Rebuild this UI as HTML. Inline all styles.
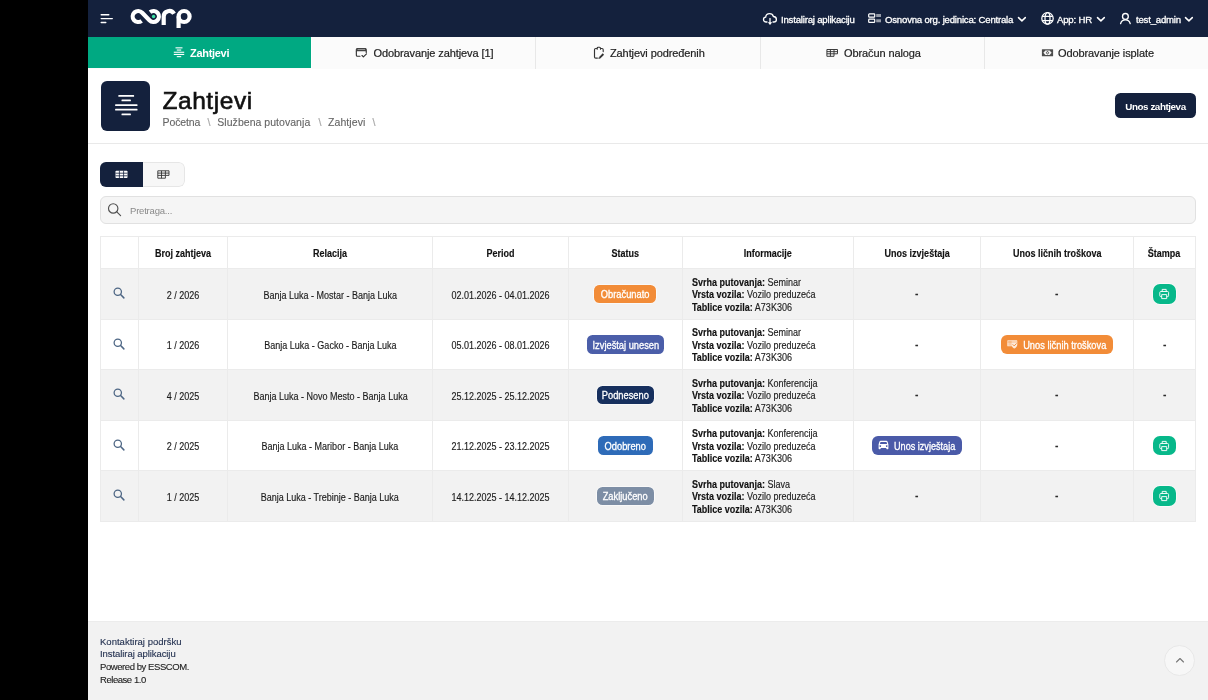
<!DOCTYPE html>
<html lang="bs">
<head>
<meta charset="utf-8">
<title>Zahtjevi</title>
<style>
*{box-sizing:border-box;margin:0;padding:0}
html,body{width:1208px;height:700px;overflow:hidden;background:#000}
body{font-family:"Liberation Sans",sans-serif;color:#111;position:relative}
.abs{position:absolute}
#app{will-change:transform;position:absolute;left:88px;top:0;width:1120px;height:700px;background:#fff;overflow:hidden}
/* navbar */
#nav{position:absolute;left:0;top:0;width:1120px;height:37px;background:#14213d}
.nt{position:absolute;top:1px;height:37px;line-height:37px;color:#fff;font-size:9.6px;white-space:nowrap;letter-spacing:-0.2px;-webkit-text-stroke:0.3px #fff}
/* tabs */
#tabs{position:absolute;left:0;top:37px;width:1120px;height:31.8px;background:#fbfbfb;box-shadow:inset 0 1.5px 0 #fff}
.tab{position:absolute;top:0;height:31.8px;width:224px;border-left:1px solid #e8e8e8;background:#fbfbfb}
.tab.on{background:#00a982;border-left:none;width:223.3px;height:31.2px}
.tl{position:absolute;top:0.5px;height:31px;line-height:31px;font-size:11px;color:#222;white-space:nowrap;letter-spacing:-0.1px;-webkit-text-stroke:0.2px #222}
.tab.on .tl{-webkit-text-stroke:0;color:#fff;font-weight:bold;font-size:11px;letter-spacing:-0.3px}
/* header */
#ibox{position:absolute;left:12.5px;top:81px;width:49.5px;height:49.6px;border-radius:6px;background:#14213d}
#title{position:absolute;left:74.5px;top:85px;font-size:24.5px;line-height:32px;color:#111;letter-spacing:0.55px;-webkit-text-stroke:0.6px #111}
#crumbs{position:absolute;left:0;top:114.5px;font-size:10.5px;line-height:14px;color:#666;white-space:nowrap;-webkit-text-stroke:0.12px #666}
#crumbs span{position:absolute;top:0}#crumbs i{position:absolute;top:0;font-style:normal;color:#b5b5b5}
#btn{position:absolute;left:1027.4px;top:93.1px;width:80.2px;height:24.9px;border-radius:5.5px;background:#14213d;color:#fff;font-size:9.8px;font-weight:bold;line-height:27px;text-align:center;letter-spacing:-0.42px;overflow:hidden}
#hr1{position:absolute;left:0;top:143px;width:1120px;height:1px;background:#e9e9e9}
/* toggle */
#tg{position:absolute;left:12px;top:161.5px;width:85px;height:25.2px;border-radius:6px;overflow:hidden}
#tg .l{position:absolute;left:0;top:0;width:43px;height:100%;background:#14213d}#tg .r{position:absolute;left:43px;top:0;width:42px;height:100%;background:#f7f7f7;border:1px solid #e6e6e6;border-left:none;border-radius:0 6px 6px 0}
/* search */
#sr{position:absolute;left:12px;top:196px;width:1095.6px;height:27.8px;border-radius:6px;background:#f5f5f5;border:1px solid #e1e1e1}
#sr span{position:absolute;left:29px;top:0.8px;line-height:26px;font-size:9.5px;color:#8a8a8a;letter-spacing:-0.2px}
/* table */
#tbl{position:absolute;left:12px;top:236px;width:1095px;border-collapse:collapse;table-layout:fixed;font-size:10px;color:#1c1c1c}
#tbl th,#tbl td{border:1px solid #ebebeb;text-align:center;vertical-align:middle;padding:0;white-space:nowrap}
#tbl th{height:32px;font-weight:bold;color:#111;background:#fff}
#tbl td{height:50.5px}
#tbl tr.o td{background:#f2f2f2}
.x{display:inline-block;position:relative;top:1.3px;transform:scaleX(0.9);transform-origin:50% 50%;-webkit-text-stroke:0.15px currentColor}
#tbl td.inf{text-align:left;padding-left:9px;line-height:12.4px}
#tbl td.inf .x{transform-origin:0 50%;top:1.6px}
#tbl td.inf b{color:#111}
.bd{display:inline-block;height:18.6px;line-height:18.4px;border-radius:5.5px;color:#fff;padding:0;white-space:nowrap;position:relative;top:0.3px;text-align:center;box-shadow:0 0 0 0.8px rgba(255,255,255,0.75)}
.x.d{top:0.2px;-webkit-text-stroke:0.4px currentColor}.bd.bt .x{top:0.7px}.bd .x{-webkit-text-stroke:0.3px #fff;top:1.6px;transform:scaleX(0.93)}
.bd.bt{padding:0;height:19px;line-height:19px;border-radius:6px;top:0.2px}.bd.bt svg{position:relative;left:1.5px}
.pr{display:inline-block;width:22.4px;height:19.6px;position:relative;top:0.2px;border-radius:7px;background:#07b88a;vertical-align:middle;box-shadow:0 0 0 0.7px rgba(255,255,255,0.8)}.pr svg{display:block}
/* footer */
#ft{position:absolute;left:0;top:621px;width:1120px;height:79px;background:#f2f2f2;border-top:1px solid #ececec}
#ft div.t{position:absolute;left:12px;font-size:9.5px;line-height:12px;color:#222;white-space:nowrap;letter-spacing:-0.15px;-webkit-text-stroke:0.12px currentColor}
#top{position:absolute;left:1076.3px;top:23.3px;width:31px;height:31px;border-radius:50%;background:#f7f7f7;border:1px solid #e8e8e8}
</style>
</head>
<body>
<div id="app">
  <div id="nav">
    <!-- hamburger -->
    <svg class="abs" style="left:12px;top:13px" width="14" height="12" viewBox="0 0 14 12"><g fill="#fff"><rect x="0.5" y="1" width="9" height="1.4" rx="0.7"/><rect x="0.5" y="4.9" width="12.5" height="1.4" rx="0.7"/><rect x="0.5" y="8.8" width="6" height="1.4" rx="0.7"/></g></svg>
    <!-- logo -->
    <svg class="abs" style="left:38px;top:4px" width="70" height="28" viewBox="0 0 70 28">
      <g fill="none" stroke="#fff" stroke-width="4.2" stroke-linecap="butt" stroke-linejoin="round">
        <path d="M15.59 16.83 A5.5 5.5 0 1 1 16.18 8.71 L23.42 16.29 A5.5 5.5 0 1 0 24.01 8.17"/>
        <path d="M37.7 21.1 V12.5 A5.5 5.5 0 0 1 48.0 9.8"/>
        <path d="M52.6 24 V12.5"/>
        <circle cx="58.1" cy="12.5" r="5.5"/>
      </g>
      <circle cx="27.6" cy="12.5" r="1.7" fill="#3be0a3"/>
    </svg>
    <!-- install -->
    <svg class="abs" style="left:674px;top:12px" width="16" height="14" viewBox="0 0 16 14"><g fill="none" stroke="#fff" stroke-width="1.3" stroke-linecap="round" stroke-linejoin="round"><path d="M5 10 H4.2 C2.5 10 1.5 8.9 1.5 7.5 C1.5 6.2 2.4 5.2 3.7 5.1 C3.9 3.1 5.5 1.7 7.6 1.7 C9.4 1.7 10.9 2.8 11.4 4.5 C13.1 4.6 14.4 5.8 14.4 7.4 C14.4 8.9 13.3 10 11.8 10 H11"/><path d="M8 6.6 V11.6"/></g><path d="M5.8 10.3 H10.2 L8 13 Z" fill="#fff"/></svg>
    <div class="nt" style="left:693px">Instaliraj aplikaciju</div>
    <!-- org -->
    <svg class="abs" style="left:780px;top:12px" width="14" height="12" viewBox="0 0 14 12"><g fill="none" stroke="#fff" stroke-width="1.2"><rect x="0.7" y="1.9" width="6" height="3.2" rx="0.7"/><rect x="0.7" y="7.2" width="6" height="3.2" rx="0.7"/></g><g fill="#fff" opacity="0.55"><rect x="8.2" y="2" width="4.8" height="3"/><rect x="8.2" y="7.3" width="4.8" height="3"/></g></svg>
    <div class="nt" style="left:797px">Osnovna org. jedinica: Centrala</div>
    <svg class="abs" style="left:929px;top:16px" width="10" height="6" viewBox="0 0 10 6"><path d="M1.5 1.6 L4.9 4.9 L8.3 1.6" fill="none" stroke="#fff" stroke-width="1.5" stroke-linecap="round" stroke-linejoin="round"/></svg>
    <!-- globe -->
    <svg class="abs" style="left:951.5px;top:11px" width="15" height="15" viewBox="0 0 15 15"><g fill="none" stroke="#fff" stroke-width="1.25"><circle cx="7.5" cy="7.4" r="5.7"/><ellipse cx="7.5" cy="7.4" rx="2.5" ry="5.7"/><path d="M2.3 5.3 H12.7 M2.3 9.5 H12.7"/></g></svg>
    <div class="nt" style="left:969px">App: HR</div>
    <svg class="abs" style="left:1008px;top:16px" width="10" height="6" viewBox="0 0 10 6"><path d="M1.5 1.6 L4.9 4.9 L8.3 1.6" fill="none" stroke="#fff" stroke-width="1.5" stroke-linecap="round" stroke-linejoin="round"/></svg>
    <!-- user -->
    <svg class="abs" style="left:1031px;top:12px" width="13" height="13" viewBox="0 0 13 13"><g fill="none" stroke="#fff" stroke-width="1.35" stroke-linecap="round"><circle cx="6.4" cy="4.4" r="2.9"/><path d="M1.6 11.6 C2.3 9.2 4.1 7.9 6.4 7.9 C8.7 7.9 10.5 9.2 11.2 11.6"/></g></svg>
    <div class="nt" style="left:1048px">test_admin</div>
    <svg class="abs" style="left:1096px;top:16px" width="10" height="6" viewBox="0 0 10 6"><path d="M1.5 1.6 L4.9 4.9 L8.3 1.6" fill="none" stroke="#fff" stroke-width="1.5" stroke-linecap="round" stroke-linejoin="round"/></svg>
  </div>
  <div id="tabs">
    <div class="tab on" style="left:0">
      <svg class="abs" style="left:85px;top:10px" width="12" height="11" viewBox="0 0 12 11"><g fill="#fff"><rect x="2.5" y="0.3" width="7" height="1.1"/><rect x="3.8" y="2.5" width="4.4" height="1.1"/><rect x="0.8" y="4.7" width="10.4" height="1.1"/><rect x="0.8" y="6.9" width="10.4" height="1.1"/><rect x="3.8" y="9.1" width="4.4" height="1.1"/></g></svg>
      <div class="tl" style="left:102px">Zahtjevi</div>
    </div>
    <div class="tab" style="left:223.3px;width:224.7px;border-left:1.5px solid #fff">
      <svg class="abs" style="left:43.2px;top:10px" width="13" height="12" viewBox="0 0 13 12"><path d="M0.8 4.3 V2.6 C0.8 1.7 1.5 1 2.4 1 H10.2 C11.1 1 11.8 1.7 11.8 2.6 V4.3 Z" fill="#444"/><path d="M2.6 2.5 H10" stroke="#aaa" stroke-width="0.8"/><g fill="none" stroke="#333" stroke-width="1.15" stroke-linecap="round" stroke-linejoin="round"><path d="M5 9.2 H2.4 C1.7 9.2 1.35 8.8 1.35 8.2 V4"/><path d="M11.25 4 V5.6"/><path d="M7 8.5 L8.4 9.9 L11.5 6.9"/></g></svg>
      <div class="tl" style="left:61.2px">Odobravanje zahtjeva [1]</div>
    </div>
    <div class="tab" style="left:447.2px;width:224.8px">
      <svg class="abs" style="left:56.8px;top:9px" width="13" height="14" viewBox="0 0 13 14"><g fill="none" stroke="#333" stroke-width="1.15" stroke-linecap="round" stroke-linejoin="round"><path d="M4.4 12.1 H2.7 C2 12.1 1.5 11.6 1.5 10.9 V3.7 C1.5 3 2 2.5 2.7 2.5 H3.6 M8 2.5 H9 C9.7 2.5 10.2 3 10.2 3.7 V5.6"/><path d="M4.2 3.2 V2.2 C4.2 1.6 4.6 1.2 5.2 1.2 H6.5 C7.1 1.2 7.5 1.6 7.5 2.2 V3.2"/><path d="M10.4 8 L6.6 11.8" stroke-width="1.9" stroke-linecap="butt"/></g><path d="M5.4 12.9 L5.9 11.1 L7.2 12.4 Z" fill="#333"/></svg>
      <div class="tl" style="left:73.8px">Zahtjevi podređenih</div>
    </div>
    <div class="tab" style="left:672px">
      <svg class="abs" style="left:65px;top:11px" width="13" height="10" viewBox="0 0 13 10"><g fill="none" stroke="#333" stroke-width="0.95"><path d="M0.9 1.5 H11.5 V5.8 H8 V8.3 H0.9 Z"/><path d="M4.4 1.5 V8.3 M8 1.5 V5.8 M0.9 3.65 H11.5 M0.9 5.8 H8"/></g></svg>
      <div class="tl" style="left:83px">Obračun naloga</div>
    </div>
    <div class="tab" style="left:896px">
      <svg class="abs" style="left:56px;top:11px" width="13" height="10" viewBox="0 0 13 10"><rect x="0.9" y="1.2" width="11.2" height="7" rx="0.5" fill="#4d4d4d"/><path d="M2.4 4.7 L4.4 2.5 H8.6 L10.6 4.7 L8.6 6.9 H4.4 Z" fill="#f4f4f4"/><path d="M6.5 2.7 L8.2 4.7 L6.5 6.7 L4.8 4.7 Z" fill="#555"/><path d="M6.5 3.7 L7.3 4.7 L6.5 5.7 L5.7 4.7 Z" fill="#eee"/></svg>
      <div class="tl" style="left:73px">Odobravanje isplate</div>
    </div>
  </div>
  <div id="ibox">
    <svg class="abs" style="left:13px;top:13px" width="24" height="24" viewBox="0 0 24 24"><g fill="#fff"><rect x="4.3" y="1" width="15.8" height="1.7" rx="0.5"/><rect x="7.5" y="5.6" width="9.4" height="1.7" rx="0.5"/><rect x="1.1" y="10.2" width="22.4" height="1.7" rx="0.5"/><rect x="1.1" y="14.8" width="22.4" height="1.7" rx="0.5"/><rect x="7.5" y="19.5" width="9.4" height="1.7" rx="0.5"/></g></svg>
  </div>
  <div id="title">Zahtjevi</div>
  <div id="crumbs"><span style="left:74.6px;letter-spacing:-0.12px">Početna</span><i style="left:119.4px">\</i><span style="left:129.3px;letter-spacing:0.04px">Službena putovanja</span><i style="left:230.6px">\</i><span style="left:240px;letter-spacing:0.08px">Zahtjevi</span><i style="left:284.6px">\</i></div>
  <div id="btn">Unos zahtjeva</div>
  <div id="hr1"></div>
  <div id="tg"><div class="l"></div><div class="r"></div>
    <svg class="abs" style="left:15px;top:8.5px" width="13" height="9" viewBox="0 0 13 9"><rect x="0.5" y="0.7" width="12" height="7.4" rx="0.8" fill="#fff"/><g stroke="#14213d" stroke-width="0.8"><path d="M4.4 0.5 V8.5 M8.6 0.5 V8.5 M0.5 3.2 H12.5 M0.5 5.8 H12.5"/></g></svg>
    <svg class="abs" style="left:57px;top:8.5px" width="13" height="9" viewBox="0 0 13 9"><g fill="none" stroke="#333" stroke-width="0.9"><path d="M0.8 0.8 H12 V5.4 H8.4 V8.2 H0.8 Z"/><path d="M4.5 0.8 V8.2 M8.4 0.8 V5.4 M0.8 3.1 H12 M0.8 5.4 H8.4"/></g></svg>
  </div>
  <div id="sr">
    <svg class="abs" style="left:6px;top:5px" width="15" height="15" viewBox="0 0 15 15"><g fill="none" stroke="#505050" stroke-width="1.15" stroke-linecap="round"><circle cx="6.2" cy="6.4" r="4.7"/><path d="M9.8 9.8 L13.6 13.6"/></g></svg>
    <span>Pretraga...</span></div>
  <table id="tbl"><colgroup><col style="width:37.5px"><col style="width:89.5px"><col style="width:205.25px"><col style="width:136px"><col style="width:113.25px"><col style="width:171px"><col style="width:127.5px"><col style="width:153px"><col style="width:62px"></colgroup>
<tr><th></th><th><span class="x">Broj zahtjeva</span></th><th><span class="x">Relacija</span></th><th><span class="x">Period</span></th><th><span class="x">Status</span></th><th><span class="x">Informacije</span></th><th><span class="x">Unos izvještaja</span></th><th><span class="x">Unos ličnih troškova</span></th><th><span class="x">Štampa</span></th></tr>
<tr class="o"><td><svg width="12.2" height="12.2" viewBox="0 0 13 13" style="vertical-align:middle;position:relative;left:-0.3px;top:-0.3px"><g fill="none" stroke="#4d6684" stroke-width="1.35" stroke-linecap="round"><circle cx="5.1" cy="5.1" r="3.9"/><path d="M8.1 8.1 L11.6 11.6" stroke-width="1.6"/></g></svg></td><td><span class="x">2 / 2026</span></td><td><span class="x">Banja Luka - Mostar - Banja Luka</span></td><td><span class="x">02.01.2026 - 04.01.2026</span></td><td><span class="bd" style="width:62px;background:#f28c38"><span class="x">Obračunato</span></span></td><td class="inf"><span class="x"><b>Svrha putovanja:</b> Seminar<br><b>Vrsta vozila:</b> Vozilo preduzeća<br><b>Tablice vozila:</b> A73K306</span></td><td><span class="x d">-</span></td><td><span class="x d">-</span></td><td><span class="pr"><svg width="22.4" height="19.6" viewBox="0 0 22.4 19.6"><g fill="none" stroke="#fff" stroke-opacity="0.92" stroke-width="1" stroke-linejoin="round"><path d="M9.2 7.5 V5.4 H13.2 V7.5"/><path d="M8.7 12.6 H7.7 C7.1 12.6 6.8 12.3 6.8 11.7 V8.5 C6.8 7.9 7.2 7.5 7.8 7.5 H14.6 C15.2 7.5 15.6 7.9 15.6 8.5 V11.7 C15.6 12.3 15.3 12.6 14.7 12.6 H13.7"/><rect x="8.7" y="10.6" width="5" height="4"/></g></svg></span></td></tr>
<tr><td><svg width="12.2" height="12.2" viewBox="0 0 13 13" style="vertical-align:middle;position:relative;left:-0.3px;top:-0.3px"><g fill="none" stroke="#4d6684" stroke-width="1.35" stroke-linecap="round"><circle cx="5.1" cy="5.1" r="3.9"/><path d="M8.1 8.1 L11.6 11.6" stroke-width="1.6"/></g></svg></td><td><span class="x">1 / 2026</span></td><td><span class="x">Banja Luka - Gacko - Banja Luka</span></td><td><span class="x">05.01.2026 - 08.01.2026</span></td><td><span class="bd" style="width:77px;background:#4b5ea9"><span class="x">Izvještaj unesen</span></span></td><td class="inf"><span class="x"><b>Svrha putovanja:</b> Seminar<br><b>Vrsta vozila:</b> Vozilo preduzeća<br><b>Tablice vozila:</b> A73K306</span></td><td><span class="x d">-</span></td><td><span class="bd bt" style="width:112px;background:#f28c38"><svg width="11" height="9" viewBox="0 0 11 9" style="vertical-align:-1px;margin-right:4.5px;left:2.2px"><path d="M0.3 0.9 Q0.3 0.3 0.9 0.3 H9.7 Q10.3 0.3 10.3 0.9 V4.6 C10.3 6.8 8.7 8 7.4 8.6 C6.5 8.2 5.5 7.5 4.9 6.3 H0.9 Q0.3 6.3 0.3 5.7 Z" fill="#fff" fill-opacity="0.82"/><g fill="none" stroke="#f28c38" stroke-linecap="round" stroke-linejoin="round"><path d="M2.1 1.2 V5.4 M3.9 1.2 V5.4" stroke-width="0.55"/><path d="M0.8 2 H9.8" stroke-width="0.5"/><path d="M5.9 4.6 L7.2 5.9 L9.3 3.7" stroke-width="0.95"/></g></svg><span class="x">Unos ličnih troškova</span></span></td><td><span class="x d">-</span></td></tr>
<tr class="o"><td><svg width="12.2" height="12.2" viewBox="0 0 13 13" style="vertical-align:middle;position:relative;left:-0.3px;top:-0.3px"><g fill="none" stroke="#4d6684" stroke-width="1.35" stroke-linecap="round"><circle cx="5.1" cy="5.1" r="3.9"/><path d="M8.1 8.1 L11.6 11.6" stroke-width="1.6"/></g></svg></td><td><span class="x">4 / 2025</span></td><td><span class="x">Banja Luka - Novo Mesto - Banja Luka</span></td><td><span class="x">25.12.2025 - 25.12.2025</span></td><td><span class="bd" style="width:57px;background:#17305e"><span class="x">Podneseno</span></span></td><td class="inf"><span class="x"><b>Svrha putovanja:</b> Konferencija<br><b>Vrsta vozila:</b> Vozilo preduzeća<br><b>Tablice vozila:</b> A73K306</span></td><td><span class="x d">-</span></td><td><span class="x d">-</span></td><td><span class="x d">-</span></td></tr>
<tr><td><svg width="12.2" height="12.2" viewBox="0 0 13 13" style="vertical-align:middle;position:relative;left:-0.3px;top:-0.3px"><g fill="none" stroke="#4d6684" stroke-width="1.35" stroke-linecap="round"><circle cx="5.1" cy="5.1" r="3.9"/><path d="M8.1 8.1 L11.6 11.6" stroke-width="1.6"/></g></svg></td><td><span class="x">2 / 2025</span></td><td><span class="x">Banja Luka - Maribor - Banja Luka</span></td><td><span class="x">21.12.2025 - 23.12.2025</span></td><td><span class="bd" style="width:55px;background:#2e6bb8"><span class="x">Odobreno</span></span></td><td class="inf"><span class="x"><b>Svrha putovanja:</b> Konferencija<br><b>Vrsta vozila:</b> Vozilo preduzeća<br><b>Tablice vozila:</b> A73K306</span></td><td><span class="bd bt" style="width:90.5px;background:#4a5aa8"><svg width="11" height="10" viewBox="0 0 11 10" style="vertical-align:-1px;margin-right:3px"><path d="M2.6 0.8 H8.4 C8.9 0.8 9.3 1.1 9.5 1.6 L10.4 4.2 V8.6 C10.4 9 10.1 9.3 9.7 9.3 H9 C8.6 9.3 8.3 9 8.3 8.6 V8 H2.7 V8.6 C2.7 9 2.4 9.3 2 9.3 H1.3 C0.9 9.3 0.6 9 0.6 8.6 V4.2 L1.5 1.6 C1.7 1.1 2.1 0.8 2.6 0.8 Z M2.5 2 L1.9 4 H9.1 L8.5 2 Z M2.3 5.2 A0.8 0.8 0 1 0 2.31 5.2 Z M8.7 5.2 A0.8 0.8 0 1 0 8.71 5.2 Z" fill="#fff" fill-rule="evenodd"/></svg><span class="x" style="transform:scaleX(0.91);left:0.7px">Unos izvještaja</span></span></td><td><span class="x d">-</span></td><td><span class="pr"><svg width="22.4" height="19.6" viewBox="0 0 22.4 19.6"><g fill="none" stroke="#fff" stroke-opacity="0.92" stroke-width="1" stroke-linejoin="round"><path d="M9.2 7.5 V5.4 H13.2 V7.5"/><path d="M8.7 12.6 H7.7 C7.1 12.6 6.8 12.3 6.8 11.7 V8.5 C6.8 7.9 7.2 7.5 7.8 7.5 H14.6 C15.2 7.5 15.6 7.9 15.6 8.5 V11.7 C15.6 12.3 15.3 12.6 14.7 12.6 H13.7"/><rect x="8.7" y="10.6" width="5" height="4"/></g></svg></span></td></tr>
<tr class="o"><td><svg width="12.2" height="12.2" viewBox="0 0 13 13" style="vertical-align:middle;position:relative;left:-0.3px;top:-0.3px"><g fill="none" stroke="#4d6684" stroke-width="1.35" stroke-linecap="round"><circle cx="5.1" cy="5.1" r="3.9"/><path d="M8.1 8.1 L11.6 11.6" stroke-width="1.6"/></g></svg></td><td><span class="x">1 / 2025</span></td><td><span class="x">Banja Luka - Trebinje - Banja Luka</span></td><td><span class="x">14.12.2025 - 14.12.2025</span></td><td><span class="bd" style="width:57px;background:#7d8ea5"><span class="x">Zaključeno</span></span></td><td class="inf"><span class="x"><b>Svrha putovanja:</b> Slava<br><b>Vrsta vozila:</b> Vozilo preduzeća<br><b>Tablice vozila:</b> A73K306</span></td><td><span class="x d">-</span></td><td><span class="x d">-</span></td><td><span class="pr"><svg width="22.4" height="19.6" viewBox="0 0 22.4 19.6"><g fill="none" stroke="#fff" stroke-opacity="0.92" stroke-width="1" stroke-linejoin="round"><path d="M9.2 7.5 V5.4 H13.2 V7.5"/><path d="M8.7 12.6 H7.7 C7.1 12.6 6.8 12.3 6.8 11.7 V8.5 C6.8 7.9 7.2 7.5 7.8 7.5 H14.6 C15.2 7.5 15.6 7.9 15.6 8.5 V11.7 C15.6 12.3 15.3 12.6 14.7 12.6 H13.7"/><rect x="8.7" y="10.6" width="5" height="4"/></g></svg></span></td></tr>
</table>
  <div id="ft">
    <div class="t" style="top:14px;color:#1f2d4d;letter-spacing:0.01px">Kontaktiraj podršku</div>
    <div class="t" style="top:26.2px;color:#1f2d4d;letter-spacing:-0.07px">Instaliraj aplikaciju</div>
    <div class="t" style="top:38.5px;letter-spacing:-0.43px">Powered by ESSCOM.</div>
    <div class="t" style="top:52.4px;letter-spacing:-0.45px">Release 1.0</div>
    <div id="top"><svg class="abs" style="left:9.5px;top:11.2px" width="10" height="6" viewBox="0 0 10 6"><path d="M1.5 5 L5 1.5 L8.5 5" fill="none" stroke="#777" stroke-width="1.1" stroke-linecap="round" stroke-linejoin="round"/></svg></div>
  </div>
</div>
</body>
</html>
